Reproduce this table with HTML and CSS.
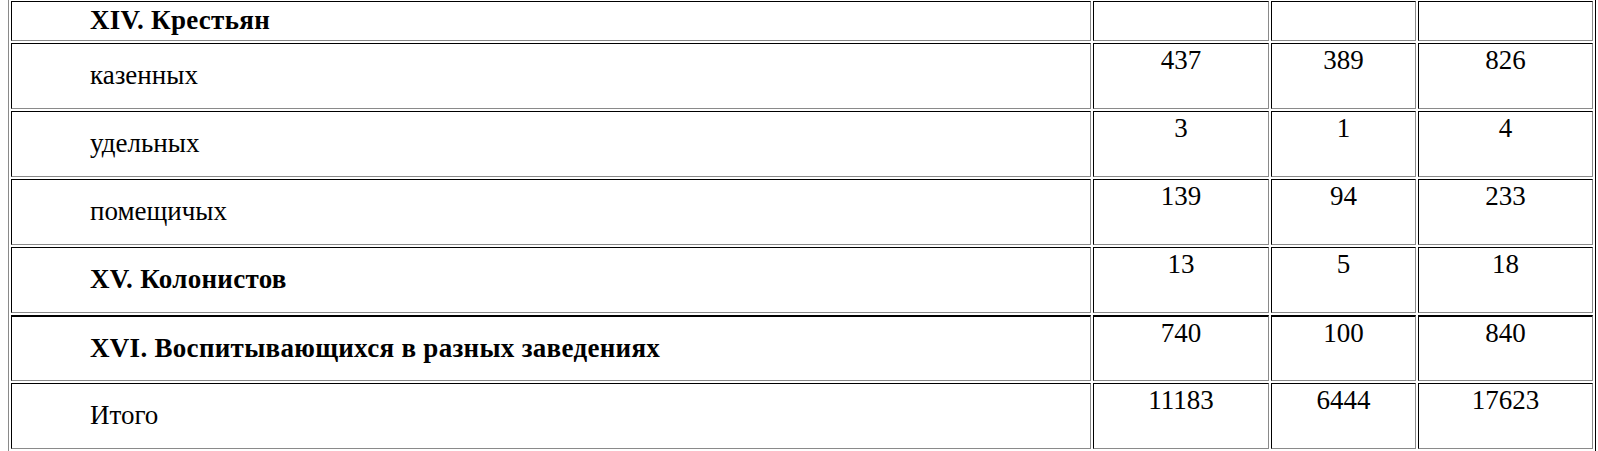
FILE: index.html
```html
<!DOCTYPE html>
<html lang="ru">
<head>
<meta charset="utf-8">
<title>Таблица</title>
<link rel="stylesheet" href="styles.css">
</head>
<body>
<table class="stats">
  <colgroup>
    <col class="c-label">
    <col class="c-num">
    <col class="c-num2">
    <col class="c-num3">
  </colgroup>
  <tr class="row-head">
    <td class="label bold">XIV. Крестьян</td>
    <td class="num"></td>
    <td class="num"></td>
    <td class="num"></td>
  </tr>
  <tr class="row">
    <td class="label">казенных</td>
    <td class="num">437</td>
    <td class="num">389</td>
    <td class="num">826</td>
  </tr>
  <tr class="row">
    <td class="label">удельных</td>
    <td class="num">3</td>
    <td class="num">1</td>
    <td class="num">4</td>
  </tr>
  <tr class="row">
    <td class="label">помещичых</td>
    <td class="num">139</td>
    <td class="num">94</td>
    <td class="num">233</td>
  </tr>
  <tr class="row">
    <td class="label bold">XV. Колонистов</td>
    <td class="num">13</td>
    <td class="num">5</td>
    <td class="num">18</td>
  </tr>
  <tr class="row row-thick">
    <td class="label bold">XVI. Воспитывающихся в разных заведениях</td>
    <td class="num">740</td>
    <td class="num">100</td>
    <td class="num">840</td>
  </tr>
  <tr class="row">
    <td class="label">Итого</td>
    <td class="num">11183</td>
    <td class="num">6444</td>
    <td class="num">17623</td>
  </tr>
</table>
</body>
</html>
```

FILE: styles.css
```css
html, body {
  background: #ffffff;
}

body {
  margin: 0 0 0 8px;
  font-family: "Liberation Serif", "Times New Roman", serif;
  font-size: 27px;
  color: #000000;
}

.stats {
  margin-top: -2px;
  width: 1588px;
  table-layout: fixed;
  border-collapse: separate;
  border-spacing: 2px;
  border-style: solid;
  border-width: 1px;
  border-color: #8a8a8a #000000 #000000 #8a8a8a;
}

.c-label { width: 1080px; }
.c-num { width: 176px; }
.c-num2 { width: 145px; }
.c-num3 { width: 175px; }

.stats td {
  box-sizing: border-box;
  border-style: solid;
  border-width: 1px;
  border-color: #000000 #8a8a8a #8a8a8a #000000;
  padding: 1px;
  line-height: 1.15;
}

.stats .row-head {
  height: 40px;
}

.stats .row {
  height: 66px;
}

.stats .row-thick td {
  border-top-width: 2px;
}

.stats .label {
  vertical-align: middle;
  padding-left: 78px;
  text-align: left;
}

.stats .bold {
  font-weight: bold;
  letter-spacing: 0.3px;
}

.stats .num {
  vertical-align: top;
  text-align: center;
  padding-top: 1px;
}
```
